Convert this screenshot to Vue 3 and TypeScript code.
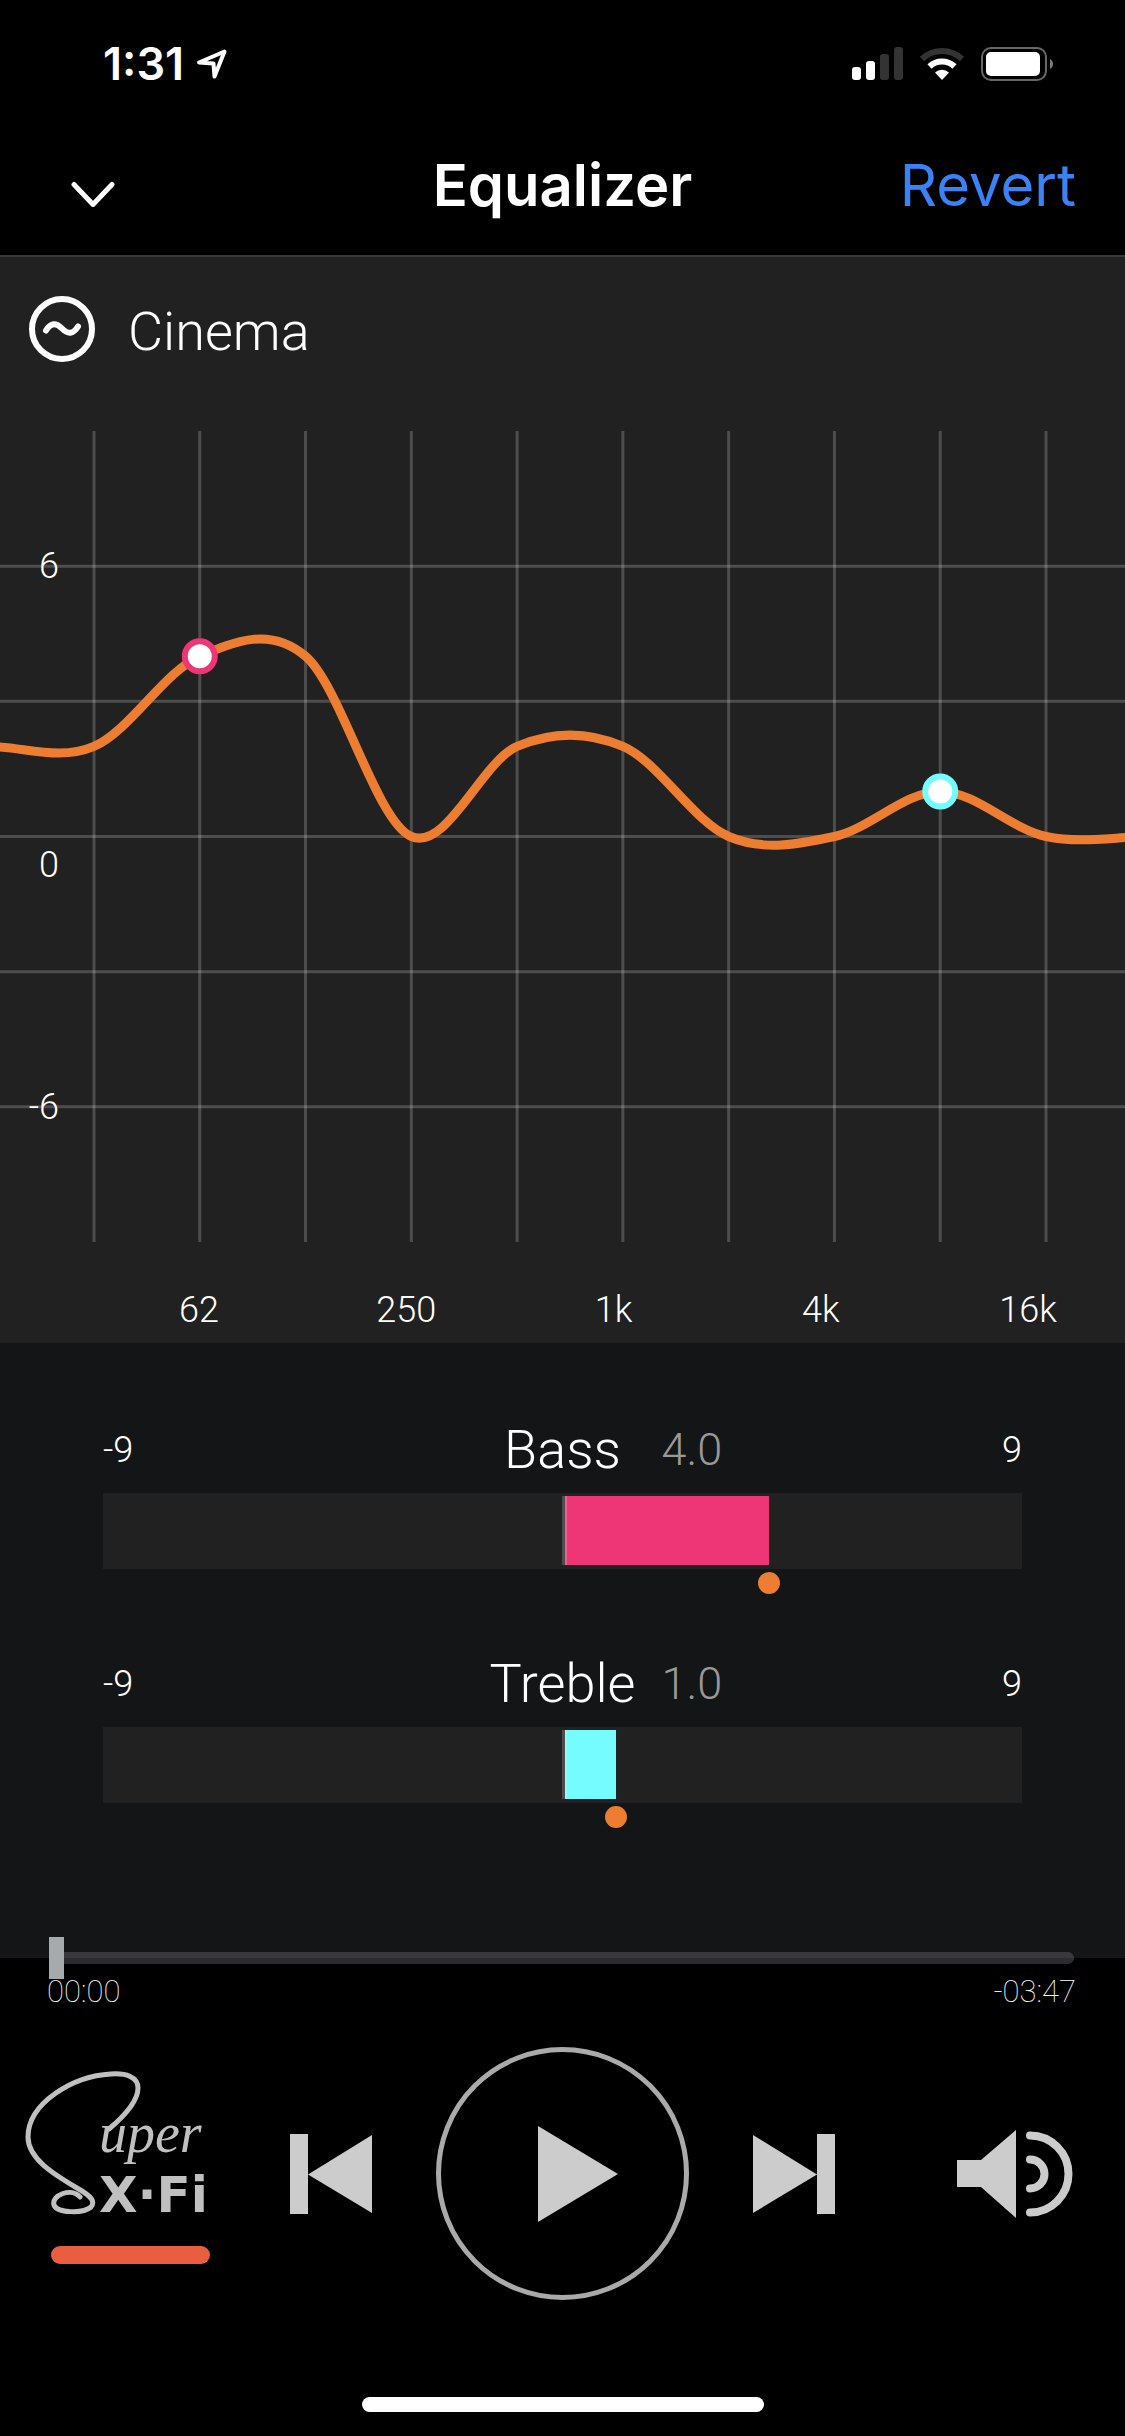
<script setup lang="ts">
import { computed, ref } from 'vue'

interface Band {
  label: string
  gain: number
}

interface Tone {
  id: string
  name: string
  value: number
  color: string
}

const MAX_GAIN = 9
const CHART_WIDTH = 1125
const CHART_HEIGHT = 811
const FIRST_BAND_X = 94
const LAST_BAND_X = 1046

const bands: Band[] = [
  { label: '31', gain: 2 },
  { label: '62', gain: 4 },
  { label: '125', gain: 4 },
  { label: '250', gain: 0 },
  { label: '500', gain: 2 },
  { label: '1k', gain: 2 },
  { label: '2k', gain: 0 },
  { label: '4k', gain: 0 },
  { label: '8k', gain: 1 },
  { label: '16k', gain: 0 },
]

const axisBands = ['62', '250', '1k', '4k', '16k']
const gridGains = [6, 3, 0, -3, -6]

const tones = ref<Tone[]>([
  { id: 'bass', name: 'Bass', value: 4, color: '#ee3575' },
  { id: 'treble', name: 'Treble', value: 1, color: '#75fcff' },
])
const position = ref(0)

const bandX = (i: number) => FIRST_BAND_X + (i * (LAST_BAND_X - FIRST_BAND_X)) / (bands.length - 1)
const gainY = (gain: number) => ((MAX_GAIN - gain) * CHART_HEIGHT) / (2 * MAX_GAIN)

// Smooth curve through every band; the end gains carry on past both edges.
const curve = computed(() => {
  const gains = bands.map((b) => b.gain)
  const first = gains[0]
  const last = gains[gains.length - 1]
  const pts = [first, first, ...gains, last, last].map((g, i) => ({ x: bandX(i - 2), y: gainY(g) }))
  let d = `M${pts[1].x} ${pts[1].y}`
  for (let i = 1; i < pts.length - 2; i++) {
    const [a, b, c, e] = [pts[i - 1], pts[i], pts[i + 1], pts[i + 2]]
    d += ` C${b.x + (c.x - a.x) / 6} ${b.y + (c.y - a.y) / 6}`
    d += ` ${c.x - (e.x - b.x) / 6} ${c.y - (e.y - b.y) / 6} ${c.x} ${c.y}`
  }
  return d
})

const fillStyle = (tone: Tone) => ({
  width: `${(tone.value / (2 * MAX_GAIN)) * 100}%`,
  background: tone.color,
})
</script>

<template>
  <div class="screen">
    <div class="status">
      <div class="clock">
        <span>1:31</span>
        <svg width="32" height="32" viewBox="0 0 32 32" aria-hidden="true">
          <path d="M28.500 3.500 3 14.500l14.500 1 1 13z" fill="none" stroke="#fff" stroke-width="4" stroke-linejoin="round" />
        </svg>
      </div>
      <div class="indicators">
        <svg width="52" height="36" viewBox="0 0 52 36" aria-hidden="true">
          <rect x="1" y="21" width="9" height="13" rx="3" fill="#fff" />
          <rect x="15" y="15" width="9" height="19" rx="3" fill="#fff" />
          <rect x="29" y="8" width="9" height="26" rx="3" fill="#333" />
          <rect x="43" y="1" width="9" height="33" rx="3" fill="#333" />
        </svg>
        <svg width="46" height="36" viewBox="0 0 46 36" aria-hidden="true">
          <path d="M3 13a29 29 0 0 1 40 0" fill="none" stroke="#333" stroke-width="6" />
          <path d="M10.500 20.500a18 18 0 0 1 25 0" fill="none" stroke="#fff" stroke-width="6" />
          <path d="M23 34l-7-7.500a10 10 0 0 1 14 0z" fill="#fff" />
        </svg>
        <svg width="73" height="36" viewBox="0 0 73 36" aria-hidden="true">
          <rect x="1" y="2" width="64" height="32" rx="9" fill="none" stroke="#686868" stroke-width="2" />
          <rect x="5" y="6" width="54" height="24" rx="5" fill="#fff" />
          <path d="M69 13c4 2 4 8 0 10z" fill="#7c7c7c" />
        </svg>
      </div>
    </div>

    <header class="nav">
      <button class="back" type="button" aria-label="Close">
        <svg width="44" height="42" viewBox="0 0 44 42" aria-hidden="true">
          <path d="M3 19.500 22 39.500 41 19.500" fill="none" stroke="#fff" stroke-width="5" stroke-linecap="round" stroke-linejoin="round" />
        </svg>
      </button>
      <h1>Equalizer</h1>
      <button class="revert" type="button">Revert</button>
    </header>

    <section class="panel">
      <button class="preset" type="button">
        <svg width="68" height="68" viewBox="0 0 68 68" aria-hidden="true">
          <circle cx="34" cy="34" r="30" fill="none" stroke="#fff" stroke-width="6" />
          <path d="M18 35.500c5-8 10-8 16-2s11 6 16-2" fill="none" stroke="#fff" stroke-width="6" stroke-linecap="round" />
        </svg>
        <span>Cinema</span>
      </button>

      <svg class="chart" :viewBox="`0 0 ${CHART_WIDTH} ${CHART_HEIGHT}`" role="img" aria-label="Equalizer curve">
        <g stroke="#fff" stroke-opacity="0.2" stroke-width="3">
          <line v-for="(b, i) in bands" :key="b.label" :x1="bandX(i)" :x2="bandX(i)" y1="0" :y2="CHART_HEIGHT" />
          <line v-for="g in gridGains" :key="g" x1="0" :x2="CHART_WIDTH" :y1="gainY(g)" :y2="gainY(g)" />
        </g>
        <g class="gain" text-anchor="end">
          <text x="59" y="147">6</text>
          <text x="59" y="446">0</text>
          <text x="59" y="688">-6</text>
        </g>
        <path :d="curve" fill="none" stroke="#ed7d31" stroke-width="9" />
        <g fill="#fff" stroke-width="6">
          <circle :cx="bandX(1)" :cy="gainY(bands[1].gain)" r="15" stroke="#ee3575" />
          <circle :cx="bandX(8)" :cy="gainY(bands[8].gain)" r="15" stroke="#75fcff" />
        </g>
      </svg>

      <div class="axis">
        <span v-for="label in axisBands" :key="label">{{ label }}</span>
      </div>
    </section>

    <section class="tones">
      <div v-for="tone in tones" :key="tone.id" class="tone">
        <div class="tone-head">
          <span>-9</span>
          <label :for="tone.id">{{ tone.name }}</label>
          <div class="tone-end">
            <output :for="tone.id">{{ tone.value.toFixed(1) }}</output>
            <span>9</span>
          </div>
        </div>
        <div class="rail">
          <div class="fill" :style="fillStyle(tone)"></div>
        </div>
        <input :id="tone.id" v-model.number="tone.value" class="knob" type="range" min="-9" max="9" step="0.5" />
      </div>
    </section>

    <section class="player">
      <input v-model.number="position" class="seek" type="range" min="0" max="227" aria-label="Playback position" />
      <div class="times">
        <span>00:00</span>
        <span>-03:47</span>
      </div>

      <div class="controls">
        <div class="side left">
          <button type="button" aria-label="Super X-Fi">
            <svg width="191" height="205" viewBox="0 0 191 205" aria-hidden="true">
              <path
                d="M84 58C103 42 113 28 113 17C113 6 101 2 86 3C48 5 3 32 3 66C3 88 30 104 52 117C68 126 70 131 66 136C58 143 32 142 29 134C26 124 47 116 55 126"
                fill="none" stroke="#c0c0c0" stroke-width="5" stroke-linecap="round" />
              <text class="script" x="74" y="81">uper</text>
              <text class="block" x="74" y="141">X·Fi</text>
              <rect x="26" y="175" width="159" height="18" rx="9" fill="#e95e3f" />
            </svg>
          </button>
          <button type="button" aria-label="Previous track">
            <svg width="82" height="80" viewBox="0 0 82 80" aria-hidden="true">
              <path d="M0 0h18v80H0zM18 40.500 82 1v78z" fill="#ccc" />
            </svg>
          </button>
        </div>
        <button type="button" aria-label="Play">
          <svg width="253" height="253" viewBox="0 0 253 253" aria-hidden="true">
            <circle cx="126.500" cy="126.500" r="124" fill="none" stroke="#aaa" stroke-width="5" />
            <path d="M102 79v96l80-48z" fill="#ccc" />
          </svg>
        </button>
        <div class="side right">
          <button type="button" aria-label="Next track">
            <svg width="82" height="80" viewBox="0 0 82 80" aria-hidden="true">
              <path d="M64 0h18v80H64zM64 40.500 0 1v78z" fill="#ccc" />
            </svg>
          </button>
          <button type="button" aria-label="Volume">
            <svg width="118" height="88" viewBox="0 0 118 88" aria-hidden="true">
              <path d="M0 30h24L59 0v88L24 57H0z" fill="#ccc" />
              <path d="M73 5.500a38.500 38.500 0 0 1 0 77M73 29.500a14.500 14.500 0 0 1 0 29" fill="none" stroke="#ccc" stroke-width="8" stroke-linecap="round" />
            </svg>
          </button>
        </div>
      </div>
    </section>

    <div class="home"></div>
  </div>
</template>

<style>
body {
  margin: 0;
  background: #000;
}
</style>

<style scoped>
.screen {
  display: flex;
  flex-direction: column;
  min-height: 100vh;
  background: #000;
  color: #fff;
  font-family: Roboto, "Liberation Sans", sans-serif;
  font-weight: 300;
}

button {
  margin: 0;
  padding: 0;
  border: 0;
  background: none;
  color: inherit;
  font: inherit;
}

svg {
  display: block;
}

.status {
  display: flex;
  align-items: center;
  justify-content: space-between;
  height: 128px;
  padding: 0 71px 0 103px;
}

.clock {
  display: flex;
  align-items: center;
  gap: 12px;
  font: 600 45px/52px Inter, sans-serif;
}

.indicators {
  display: flex;
  gap: 16px;
}

.nav {
  display: grid;
  grid-template-columns: 1fr auto 1fr;
  align-items: center;
  height: 114px;
  padding: 0 49px 13px;
  font-family: Inter, sans-serif;
}

.nav h1 {
  margin: 0;
  font-size: 58px;
  font-weight: 600;
  line-height: 72px;
}

.back {
  justify-self: start;
  padding: 2px 22px 0;
}

.revert {
  justify-self: end;
  color: #3b82f7;
  font-size: 58px;
  font-weight: 400;
  line-height: 72px;
}

.panel {
  border-top: 2px solid #3a3a3a;
  background: #212121;
}

.preset {
  display: flex;
  align-items: center;
  gap: 32px;
  margin: 38px 28px 68px;
  font-size: 54px;
  line-height: 62px;
}

.preset span {
  padding-top: 6px;
}

.chart {
  width: 100%;
  height: auto;
}

.gain {
  fill: #fff;
  font-size: 36px;
}

.axis {
  display: flex;
  justify-content: space-between;
  padding: 46px 42px 11px 144px;
  font-size: 36px;
  line-height: 44px;
}

.axis span {
  width: 110px;
  text-align: center;
}

.tones {
  display: flex;
  flex-direction: column;
  gap: 54px;
  padding: 71px 103px 130px;
  background: #141517;
}

.tone {
  display: flex;
  flex-direction: column;
}

.tone-head {
  display: grid;
  grid-template-columns: 1fr 198px 1fr;
  align-items: center;
  padding-top: 2px;
  font-size: 36px;
  line-height: 68px;
}

.tone-head label {
  font-size: 54px;
  text-align: center;
}

.tone-end {
  display: flex;
  align-items: center;
  justify-content: space-between;
}

.tone-end output {
  color: #999;
  font-size: 45px;
}

.rail {
  position: relative;
  height: 69px;
  margin-top: 9px;
  padding: 3px 0 4px;
  background: #212121;
}

.rail::after {
  content: "";
  position: absolute;
  top: 3px;
  bottom: 4px;
  left: calc(50% - 1px);
  width: 5px;
  background: rgba(255, 255, 255, 0.2);
}

.fill {
  height: 100%;
  margin-left: calc(50% + 2px);
}

.knob,
.seek {
  appearance: none;
  display: block;
  background: none;
}

.knob {
  width: calc(100% + 22px);
  height: 22px;
  margin: 3px -13px 0 -9px;
}

.knob::-webkit-slider-thumb {
  appearance: none;
  width: 22px;
  height: 22px;
  border-radius: 50%;
  background: #ed7d31;
}

.player {
  margin-top: -21px;
}

.seek {
  width: calc(100% - 100px);
  height: 42px;
  margin: 0 51px 0 49px;
}

.seek::-webkit-slider-runnable-track {
  height: 12px;
  border-radius: 6px;
  background: rgba(126, 126, 131, 0.35);
}

.seek::-webkit-slider-thumb {
  appearance: none;
  width: 15px;
  height: 42px;
  margin-top: -15px;
  background: #a6aaad;
}

.times {
  display: flex;
  justify-content: space-between;
  padding: 0 49px 0 47px;
  font-size: 31px;
  font-weight: 100;
  line-height: 26px;
}

.controls {
  display: grid;
  grid-template-columns: 1fr auto 1fr;
  align-items: center;
  padding: 42px 25px 0;
}

.side {
  display: flex;
  align-items: center;
  justify-content: space-between;
}

.left {
  padding-right: 64px;
}

.right {
  padding: 0 25px 0 64px;
}

.script {
  fill: #c0c0c0;
  font: italic 400 56px "Liberation Serif", serif;
}

.block {
  fill: #c0c0c0;
  font: 700 50px "DejaVu Sans", sans-serif;
}

.home {
  align-self: center;
  width: 402px;
  max-width: 80%;
  height: 15px;
  margin: auto 0 24px;
  border-radius: 8px;
  background: #fff;
}
</style>
